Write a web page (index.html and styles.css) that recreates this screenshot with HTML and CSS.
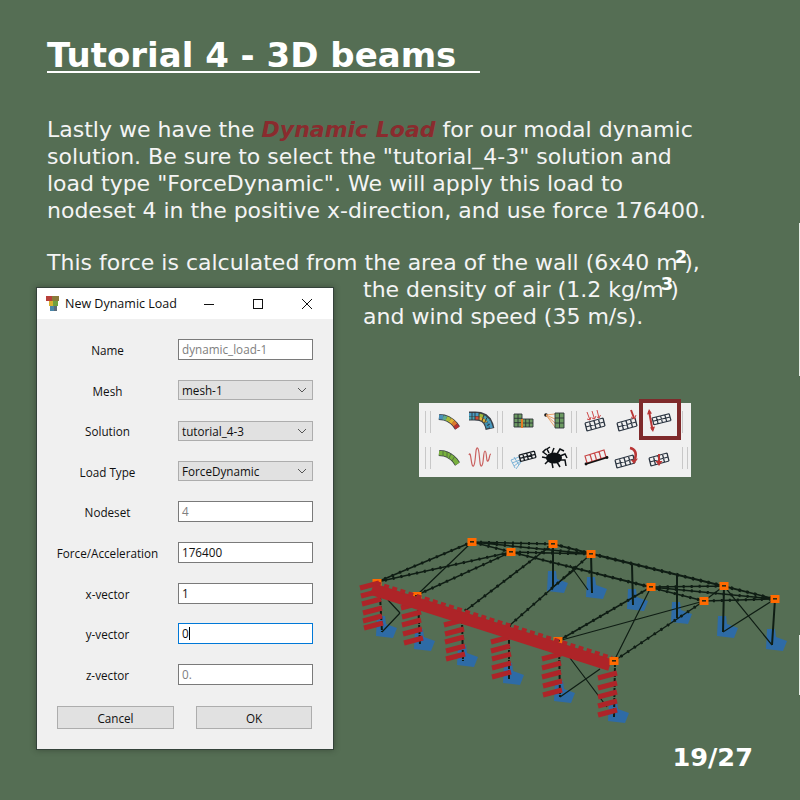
FILE: index.html
```html
<!doctype html>
<html lang="en">
<head>
    <meta charset="UTF-8">
    <title>Tutorial 4 - 3D beams</title>
    <link rel="stylesheet" href="styles.css">
</head>
<body>
<svg class="defs" width="0" height="0">
    <defs>
        <path id="grid" d="M0 7L18 2M1 11L19 6M2 15L20 10M0 7L2 15M4.5 5.75L6.5 13.75M9 4.5L11 12.5M13.5 3.25L15.5 11.25M18 2L20 10"/>
        <polygon id="support" points="-5,-16 3,-16 4,-8 15,-4 11,6 -6,4"/>
        <g id="node">
            <rect x="-4.5" y="-4" width="9" height="8" fill="#ff6a00"/>
            <rect x="-2" y="-1" width="4" height="1.6" fill="#2a2a14"/>
        </g>
        <polyline id="bar" points="0,4 19,-1"/>
        <path id="roof" d="M377 582L472 542M417 595L511 552M377 582L511 552M465 611L553 544M509 626L591 554M558 641L651 587M614 661L704 601M472 542L591 554L775 599M472 542L553 544L724 586L775 599M511 552L704 601L775 599M511 552L651 587L724 586M651 587L775 599M553 544L591 554M511 552L591 554M472 542L511 552"/>
    </defs>
</svg>

<main class="slide">
    <h1 class="title">Tutorial 4 - 3D beams&nbsp;&nbsp;</h1>
    <p class="text intro">
        Lastly we have the <b class="load-name">Dynamic Load</b> for our modal dynamic<br>
        solution. Be sure to select the "tutorial_4-3" solution and<br>
        load type "ForceDynamic". We will apply this load to<br>
        nodeset 4 in the positive x-direction, and use force 176400.
    </p>
    <p class="text force-line">This force is calculated from the area of the wall (6x40 m<b class="power">2</b>),</p>

    <div class="lower">
        <section class="dialog">
            <header class="dialog-bar">
                <svg class="dialog-icon" width="13" height="15" viewBox="0 0 13 15">
                    <rect x="0" y="0" width="6" height="5" fill="#b8403a"/>
                    <rect x="6" y="0" width="7" height="5" fill="#8a7a3a"/>
                    <rect x="3" y="5" width="4" height="5" fill="#d8b030"/>
                    <rect x="7" y="5" width="5" height="5" fill="#70a040"/>
                    <rect x="4" y="10" width="4" height="5" fill="#4a86a8"/>
                    <rect x="8" y="10" width="3" height="5" fill="#5a6a7a"/>
                </svg>
                <span class="dialog-title">New Dynamic Load</span>
                <svg class="win-btn" width="10" height="10" viewBox="0 0 10 10"><path d="M0 5.5H10"/></svg>
                <svg class="win-btn" width="10" height="10" viewBox="0 0 10 10"><rect x="0.5" y="0.5" width="9" height="9"/></svg>
                <svg class="win-btn" width="10" height="10" viewBox="0 0 10 10"><path d="M0 0L10 10M10 0L0 10"/></svg>
            </header>
            <div class="dialog-body">
                <div class="form">
                    <div class="row"><label>Name</label><div class="field muted">dynamic_load-1</div></div>
                    <div class="row"><label>Mesh</label><div class="select">mesh-1<svg width="10" height="6" viewBox="0 0 10 6"><path d="M1 1L5 5L9 1"/></svg></div></div>
                    <div class="row"><label>Solution</label><div class="select">tutorial_4-3<svg width="10" height="6" viewBox="0 0 10 6"><path d="M1 1L5 5L9 1"/></svg></div></div>
                    <div class="row"><label>Load Type</label><div class="select">ForceDynamic<svg width="10" height="6" viewBox="0 0 10 6"><path d="M1 1L5 5L9 1"/></svg></div></div>
                    <div class="row"><label>Nodeset</label><div class="field muted">4</div></div>
                    <div class="row"><label>Force/Acceleration</label><div class="field">176400</div></div>
                    <div class="row"><label>x-vector</label><div class="field">1</div></div>
                    <div class="row"><label>y-vector</label><div class="field focused">0<i class="caret"></i></div></div>
                    <div class="row"><label>z-vector</label><div class="field muted">0.</div></div>
                </div>
                <div class="buttons">
                    <div class="button cancel">Cancel</div>
                    <div class="button ok">OK</div>
                </div>
            </div>
        </section>

        <div class="side">
            <p class="text side-text">
                the density of air (1.2 kg/m<b class="power">3</b>)<br>
                and wind speed (35 m/s).
            </p>

            <div class="toolbar">
                <div class="tool-row">
                    <i class="sep"></i><i class="sep second"></i>
                    <svg class="tool" viewBox="0 0 32 24">
                        <polyline class="beam-edge" points="6,7 11,7.5 15,9 19,11.5 22,14.5 24.5,18"/>
                        <path class="seg" stroke="#4a8fb8" d="M6 7L10 7.3"/>
                        <path class="seg" stroke="#5caa90" d="M10 7.3L13.5 8.3"/>
                        <path class="seg" stroke="#a5bd3a" d="M13.5 8.3L17 10"/>
                        <path class="seg" stroke="#e3b435" d="M17 10L20 12.3"/>
                        <path class="seg" stroke="#dd7a2c" d="M20 12.3L22.5 15"/>
                        <path class="seg" stroke="#b93131" d="M22.5 15L24.5 18"/>
                    </svg>
                    <svg class="tool" viewBox="0 0 32 24">
                        <polyline class="beam-edge wide" points="4,6 10,6 15,6.5 19,8 22,11 24,15 25,19"/>
                        <path class="seg thin" stroke="#4a9ac0" d="M4 4.5H14"/>
                        <path class="seg thin" stroke="#49a0b0" d="M4 8H10"/>
                        <path class="seg thin" stroke="#d24b35" d="M10 8H14"/>
                        <path class="seg thin" stroke="#9dbb3c" d="M14 4.8L19 6.5"/>
                        <path class="seg thin" stroke="#e3b435" d="M14 8L18 9.5"/>
                        <path class="seg thin" stroke="#4aa5b5" d="M19 6.5L24 11"/>
                        <path class="seg thin" stroke="#e3b435" d="M18 9.5L21 12.5"/>
                        <path class="seg thin" stroke="#4a9ac0" d="M24 11L26.5 18"/>
                        <path class="seg thin" stroke="#3c90b0" d="M21 12.5L23 18"/>
                        <path class="mesh-lines" d="M7 2V10M10 2V10M14 2.5V10M19 4.5L17 11M22 7.5L19.5 13M25 14L22 15.5"/>
                    </svg>
                    <i class="sep"></i><i class="sep second wide-gap"></i>
                    <svg class="tool" viewBox="0 0 32 24">
                        <rect class="mesh-fill" x="7" y="4" width="8" height="13"/>
                        <rect class="mesh-fill" x="15" y="9" width="11" height="8"/>
                        <path class="mesh-lines" d="M7 4H15V17H7ZM7 8.3H15M7 12.6H15M11 4V17M15 9H26V17H15M15 13H26M18.7 9V17M22.3 9V17"/>
                        <path class="orange-line" d="M15 9V18"/>
                    </svg>
                    <svg class="tool" viewBox="0 0 32 24">
                        <circle cx="7" cy="5" r="1.8" fill="#111"/>
                        <path class="orange-thin" d="M7 5L16 4M7 5L16 9M7 5L16 13M7 5L16 17"/>
                        <rect class="mesh-fill" x="16" y="3" width="9" height="15"/>
                        <path class="mesh-lines" d="M16 3L25 3V18L16 18ZM16 8H25M16 13H25M20.5 3V18"/>
                    </svg>
                    <i class="sep"></i><i class="sep second"></i>
                    <svg class="tool" viewBox="0 0 32 24">
                        <use href="#grid" class="grid-line" transform="translate(6,6)"/>
                        <path class="red-thin" d="M8 2L11 10M13 1L15.5 9M18 0L20 8"/>
                        <path class="red-thin" d="M8 9L11 10L12 7M13 8L15.5 9L17 6M18 7L20 8L21.5 5"/>
                    </svg>
                    <svg class="tool" viewBox="0 0 32 24">
                        <use href="#grid" class="grid-line" transform="translate(6,6)"/>
                        <path class="red-thick" d="M20 0L23 8"/>
                        <path class="red-thin" d="M20 7L23.5 9L25 5"/>
                    </svg>
                    <svg class="tool" viewBox="0 0 32 24">
                        <use href="#grid" class="grid-line" transform="translate(9,2) scale(0.95,0.85)"/>
                        <path class="red-thick" d="M6 1L9.5 20"/>
                        <path class="red-fill" d="M6 -1L9 3.5L4 4.5ZM10 22L7 17.5L12 16.5Z"/>
                    </svg>
                    <i class="sep last"></i>
                    <div class="tool-mark"></div>
                </div>
                <div class="tool-row">
                    <i class="sep"></i><i class="sep second"></i>
                    <svg class="tool" viewBox="0 0 32 24">
                        <polyline class="beam-edge" points="6,7 11,7.5 15,9 19,11.5 22,14.5 24.5,18"/>
                        <polyline class="beam-green" points="6,7 11,7.5 15,9 19,11.5 22,14.5 24.5,18"/>
                        <path class="mesh-lines faint" d="M10 4.5V10M14 5.5V11M18 7.5L16 12.5M21.5 10.5L19 15"/>
                    </svg>
                    <svg class="tool" viewBox="0 0 32 24">
                        <path class="wave" d="M4 9C6 3 6 22 8.5 20C11 18 10 1 12.5 2C15 3 14 21 16.5 20C19 19 18 5 20 5C22 5 21 17 23 15C25 13 24 8 26 8"/>
                    </svg>
                    <i class="sep"></i><i class="sep second wide-gap"></i>
                    <svg class="tool" viewBox="0 0 32 24">
                        <path class="blue-thin" d="M4 14L12 11M5 17L13 14M7 20L14 15M9 23L14 16M4 14L8 22M7 11L12 19"/>
                        <use href="#grid" class="grid-line bold" transform="translate(12,3.5) scale(0.85,0.8)"/>
                    </svg>
                    <svg class="tool" viewBox="0 0 32 24">
                        <ellipse cx="15" cy="12" rx="8" ry="5.5" fill="#0c1014"/>
                        <path class="spider" d="M8 9L4 6L7 3M10 7L8 3L11 1M13 7L15 2M18 8L21 3L25 5M21 10L26 8L28 12M21 14L26 14L27 20M18 16L21 21M13 17L14 22M9 15L6 18M8 12L3 11"/>
                    </svg>
                    <i class="sep"></i><i class="sep second"></i>
                    <svg class="tool" viewBox="0 0 32 24">
                        <path class="red-frame" d="M6 10L25 4L27 11L8 17ZM11 8.5L13 15M15.5 7L17.5 14M20 5.5L22 12.5"/>
                        <path class="black-bar" d="M7 18L28 11.5"/>
                        <circle cx="7" cy="18" r="1.4" fill="#111"/>
                        <circle cx="28" cy="11.5" r="1.4" fill="#111"/>
                    </svg>
                    <svg class="tool" viewBox="0 0 32 24">
                        <use href="#grid" class="grid-line" transform="translate(4,7)"/>
                        <path class="red-arc" d="M19 2C24 3 26 7 24 13"/>
                        <path class="red-fill" d="M20 14L27 12.5L23 18Z"/>
                    </svg>
                    <svg class="tool" viewBox="0 0 32 24">
                        <use href="#grid" class="grid-line" transform="translate(6,5)"/>
                        <path class="red-thick" d="M16 8V16"/>
                        <path class="red-fill" d="M12.5 15H19.5L16 20Z"/>
                    </svg>
                    <i class="sep last"></i><i class="sep second"></i>
                </div>
            </div>

            <svg class="model" width="450" height="195" viewBox="350 530 450 195">
                <g fill="#2e6ba6">
                    <use href="#support" x="382" y="632"/>
                    <use href="#support" x="420" y="645"/>
                    <use href="#support" x="463" y="661"/>
                    <use href="#support" x="509" y="679"/>
                    <use href="#support" x="560" y="697"/>
                    <use href="#support" x="614" y="717"/>
                    <use href="#support" x="553" y="587"/>
                    <use href="#support" x="592" y="593"/>
                    <use href="#support" x="633" y="605"/>
                    <use href="#support" x="677" y="618"/>
                    <use href="#support" x="723" y="632"/>
                    <use href="#support" x="772" y="645"/>
                </g>

                <use href="#roof" class="beam-line"/>
                <use href="#roof" class="beam-dots"/>
                <path class="beam-thin" d="M417 595L472 542M558 641L704 601M614 661L651 587M704 601L724 586M724 586L772 645M775 599L723 632M577 568L553 587M570 565L588 590M388 600L400 613M400 613L382 632M600 669L560 697M570 658L607 707"/>
                <path class="post" d="M380 596L382 632M418 600L420 645M462 620L463 661M509 630L509 679M559 645L560 697M615 663L614 717"/>
                <path class="post solid" d="M553 544L553 587M591 554L592 593M632 565L633 605M677 575L677 618M724 586L723 632M775 599L772 645"/>

                <use href="#node" x="558" y="641"/>
                <use href="#node" x="417" y="596"/>
                <use href="#node" x="377" y="583"/>

                <g class="struts">
                    <use href="#bar" x="360" y="584"/><use href="#bar" x="361" y="592"/><use href="#bar" x="362" y="600"/>
                    <use href="#bar" x="363" y="609"/><use href="#bar" x="363" y="617"/><use href="#bar" x="364" y="624"/>
                    <use href="#bar" x="401" y="604"/><use href="#bar" x="402" y="613"/><use href="#bar" x="402" y="621"/>
                    <use href="#bar" x="403" y="630"/><use href="#bar" x="404" y="639"/>
                    <use href="#bar" x="444" y="621"/><use href="#bar" x="445" y="630"/><use href="#bar" x="445" y="638"/>
                    <use href="#bar" x="446" y="647"/><use href="#bar" x="446" y="655"/>
                    <use href="#bar" x="491" y="638"/><use href="#bar" x="491" y="647"/><use href="#bar" x="492" y="655"/>
                    <use href="#bar" x="492" y="664"/><use href="#bar" x="492" y="673"/>
                    <use href="#bar" x="542" y="655"/><use href="#bar" x="542" y="664"/><use href="#bar" x="542" y="673"/>
                    <use href="#bar" x="543" y="682"/><use href="#bar" x="543" y="691"/>
                    <use href="#bar" x="598" y="674"/><use href="#bar" x="598" y="684"/><use href="#bar" x="598" y="693"/>
                    <use href="#bar" x="598" y="702"/><use href="#bar" x="598" y="711"/>
                </g>
                <path class="red-band" d="M372 589L610 665"/>
                <path class="red-teeth" d="M376 583L612 658"/>

                <use href="#node" x="472" y="542"/>
                <use href="#node" x="511" y="552"/>
                <use href="#node" x="553" y="544"/>
                <use href="#node" x="591" y="554"/>
                <use href="#node" x="651" y="587"/>
                <use href="#node" x="724" y="586"/>
                <use href="#node" x="704" y="601"/>
                <use href="#node" x="775" y="599"/>
                <use href="#node" x="614" y="661"/>
            </svg>

            <div class="page-no">19/27</div>
        </div>
    </div>
    <i class="edge edge-top"></i>
    <i class="edge edge-bottom"></i>
</main>
</body>
</html>
```

FILE: styles.css
```css
* {
    padding: 0;
    margin: 0;
    box-sizing: border-box;
}

html, body {
    width: 800px;
    height: 800px;
    overflow: hidden;
}

body {
    background-color: #556e54;
    font-family: "DejaVu Sans", sans-serif;
    color: #fff;
}

.defs {
    display: block;
    height: 0;
}

.slide {
    position: relative;
    width: 800px;
    height: 800px;
    padding-top: 33px;
}

.title {
    margin-left: 47px;
    font-size: 34px;
    line-height: 44px;
    font-weight: bold;
    text-decoration: underline;
    text-decoration-thickness: 2px;
    text-underline-offset: 4px;
    white-space: pre;
}

.text {
    font-size: 22px;
    line-height: 27px;
    color: #f4f4f4;
    white-space: nowrap;
}

.intro {
    margin: 39px 0 0 47px;
}

.load-name {
    font-style: italic;
    color: #8a2b2e;
}

.force-line {
    margin: 25px 0 0 47px;
}

.power {
    font-size: 18px;
    line-height: 0;
    font-weight: bold;
    color: #fff;
    margin: 0 -3px 0 -3px;
    position: relative;
    top: -7px;
}

.lower {
    display: flex;
    align-items: flex-start;
    padding-left: 36px;
}

/* dialog */
.dialog {
    width: 298px;
    height: 463px;
    flex: none;
    margin-top: 11px;
    background-color: #f0f0f0;
    border: 1px solid #34423a;
    box-shadow: 0 0 6px rgba(30, 40, 30, 0.45);
    color: #101010;
    font-family: "Open Sans", sans-serif;
    font-size: 11.7px;
    display: flex;
    flex-direction: column;
}

.dialog-bar {
    height: 31px;
    flex: none;
    background-color: #fff;
    display: flex;
    align-items: center;
    padding-left: 9px;
}

.dialog-icon {
    flex: none;
    margin-right: 6px;
}

.dialog-title {
    flex: none;
    width: 139px;
    font-size: 12.5px;
}

.win-btn {
    flex: none;
    fill: none;
    stroke: #111;
    stroke-width: 1;
    margin-right: 39px;
}

.win-btn:last-child {
    margin-right: 0;
}

.dialog-body {
    padding-top: 20px;
}

.form {
    display: flex;
    flex-direction: column;
    gap: 19.6px;
}

.row {
    height: 21px;
    display: flex;
    align-items: center;
}

.row label {
    width: 141px;
    text-align: center;
    padding-top: 1px;
}

.field,
.select {
    width: 135px;
    height: 21px;
    line-height: 19px;
    padding-left: 3px;
    white-space: nowrap;
}

.field {
    background-color: #fff;
    border: 1px solid #7a7a7a;
}

.muted {
    color: #808080;
}

.focused {
    border-color: #0078d7;
}

.caret {
    display: inline-block;
    width: 1px;
    height: 13px;
    background-color: #000;
    vertical-align: -2px;
}

.select {
    height: 20px;
    line-height: 18px;
    background-color: #e1e1e1;
    border: 1px solid #adadad;
    display: flex;
    align-items: center;
    justify-content: space-between;
    padding-right: 5px;
}

.select svg {
    fill: none;
    stroke: #555;
    stroke-width: 1;
}

.buttons {
    display: flex;
    gap: 22px;
    margin: 21px 0 0 20px;
}

.button {
    height: 23px;
    line-height: 22px;
    text-align: center;
    background-color: #e1e1e1;
    border: 1px solid #adadad;
}

.cancel {
    width: 117px;
}

.ok {
    width: 116px;
}

/* right side */
.side {
    margin-left: 16px;
    width: 450px;
    flex: none;
}

.side-text {
    padding-left: 13px;
}

.toolbar {
    position: relative;
    width: 272px;
    height: 74px;
    margin: 73px 0 0 69px;
    background-color: #f0f0f0;
    padding: 1px 0 0 6px;
    display: flex;
    flex-direction: column;
    gap: 12px;
}

.tool-row {
    display: flex;
    align-items: center;
    height: 24px;
    margin-top: 6px;
}

.tool-row + .tool-row {
    margin-top: 0;
}

.sep {
    display: block;
    width: 1px;
    height: 22px;
    background-color: #c8c8c8;
    flex: none;
}

.sep.second {
    margin-left: 4px;
}

.sep.wide-gap {
    margin-right: 2px;
}

.sep.last {
    margin-left: 7px;
    margin-right: 0;
}

.tool {
    width: 32px;
    height: 24px;
    flex: none;
    overflow: visible;
}

.sep.second + .tool {
    margin-left: 2px;
}

.tool-mark {
    position: absolute;
    left: 220px;
    top: -4px;
    width: 42px;
    height: 41px;
    border: 4px solid #7f2a2b;
}

.beam-edge {
    fill: none;
    stroke: #3a4048;
    stroke-width: 6;
}

.beam-edge.wide {
    stroke-width: 9;
}

.beam-green {
    fill: none;
    stroke: #78b03e;
    stroke-width: 4.5;
}

.seg {
    fill: none;
    stroke-width: 4.5;
}

.seg.thin {
    stroke-width: 3;
}

.mesh-fill {
    fill: #6c9a62;
}

.mesh-lines {
    fill: none;
    stroke: #2c3338;
    stroke-width: 0.9;
}

.mesh-lines.faint {
    stroke: #4e6b3e;
}

.orange-line {
    fill: none;
    stroke: #e47a26;
    stroke-width: 2;
}

.orange-thin {
    fill: none;
    stroke: #eda46c;
    stroke-width: 1;
}

.grid-line {
    fill: none;
    stroke: #2a3440;
    stroke-width: 1.25;
}

.grid-line.bold {
    stroke: #141a20;
    stroke-width: 1.6;
}

.red-thin {
    fill: none;
    stroke: #cf4a4a;
    stroke-width: 1;
}

.red-thick {
    fill: none;
    stroke: #b93636;
    stroke-width: 2;
}

.red-fill {
    fill: #b93636;
}

.red-arc {
    fill: none;
    stroke: #b93636;
    stroke-width: 2.5;
}

.red-frame {
    fill: none;
    stroke: #c84545;
    stroke-width: 1.2;
}

.black-bar {
    fill: none;
    stroke: #111;
    stroke-width: 1.6;
}

.wave {
    fill: none;
    stroke: #c9605f;
    stroke-width: 1.2;
}

.blue-thin {
    fill: none;
    stroke: #7fb5d8;
    stroke-width: 1;
}

.spider {
    fill: none;
    stroke: #0c1014;
    stroke-width: 1.5;
}

/* the beam model */
.model {
    display: block;
    margin-top: 53px;
}

.beam-line {
    fill: none;
    stroke: #0f1d14;
    stroke-width: 1.5;
}

.beam-dots {
    fill: none;
    stroke: #0f1d14;
    stroke-width: 3;
    stroke-dasharray: 2 6;
}

.beam-thin {
    fill: none;
    stroke: #0f1d14;
    stroke-width: 1.2;
}

.post {
    fill: none;
    stroke: #0f1d14;
    stroke-width: 2;
    stroke-dasharray: 4 1;
}

.post.solid {
    stroke-dasharray: none;
}

.struts {
    fill: none;
    stroke: #ae2428;
    stroke-width: 5;
}

.red-band {
    fill: none;
    stroke: #ae2428;
    stroke-width: 12;
}

.red-teeth {
    fill: none;
    stroke: #ae2428;
    stroke-width: 4;
    stroke-dasharray: 5 3.5;
}

.page-no {
    margin-top: 16px;
    padding-right: 47px;
    text-align: right;
    font-size: 25.6px;
    line-height: 32px;
    font-weight: bold;
}

.edge {
    position: absolute;
    right: 0;
    width: 1px;
    background-color: #e8eee8;
}

.edge-top {
    top: 223px;
    height: 153px;
}

.edge-bottom {
    top: 635px;
    height: 60px;
}
```
